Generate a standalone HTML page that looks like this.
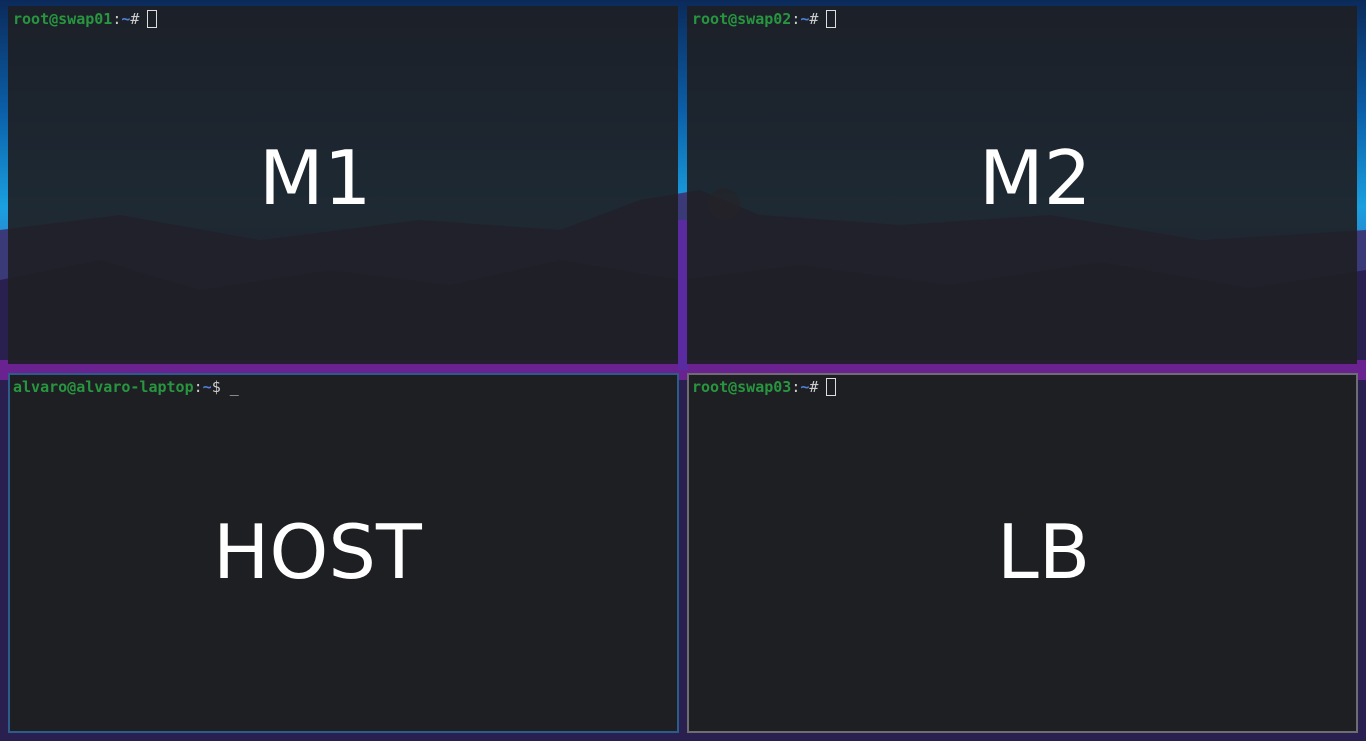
<!DOCTYPE html>
<html><head><meta charset="utf-8"><style>
html,body{margin:0;padding:0;width:1366px;height:741px;overflow:hidden}
body{position:relative;background:linear-gradient(180deg,#0b2a5a 0%,#0b5fa8 15%,#1aa0e0 28%,#3a6fc0 38%,#5a3aa8 48%,#6a2a9a 55%,#3a1a6a 75%,#14123a 100%)}
.p{position:absolute;box-sizing:border-box;font-family:"DejaVu Sans Mono","Liberation Mono",monospace;font-size:15px;font-weight:bold;color:#ddd}
.t{background:rgba(30,32,36,0.92)}
.b{background:#1e1f23}
.pr{position:absolute;left:5px;top:4px;white-space:pre}
.g{color:#27963f}.bl{color:#4f7fd6}.w{color:#ccc;font-weight:normal}
.cur{display:inline-block;width:10px;height:18px;border:1px solid #ddd;box-sizing:border-box;vertical-align:-4px;margin-left:8px}
.big{position:absolute;font-family:"DejaVu Sans",sans-serif;font-weight:normal;font-size:75px;color:#fff;line-height:1}
</style></head><body>
<svg style="position:absolute;left:0;top:0" width="1366" height="741">
<path d="M0,230 L120,215 L260,240 L420,220 L560,230 L640,200 L700,190 L760,215 L900,225 L1050,215 L1200,240 L1366,230 L1366,741 L0,741Z" fill="#3a3a78"/>
<path d="M0,280 L100,260 L200,290 L330,270 L450,285 L560,260 L680,280 L800,265 L950,285 L1100,262 L1250,288 L1366,270 L1366,741 L0,741Z" fill="#2a2050"/>
<rect x="0" y="360" width="1366" height="20" fill="#6a2290"/>
<rect x="678" y="220" width="10" height="150" fill="#5a2aa0"/>
<circle cx="724" cy="204" r="16" fill="#6a5050" opacity="0.6"/>
</svg>
<div class="p t" style="left:8px;top:6px;width:670px;height:358px"><div class="pr"><span class="g">root@swap01</span><span class="w">:</span><span class="bl">~</span><span class="w">#</span><span class="cur"></span></div><div class="big" style="left:251px;top:135px">M1</div></div>
<div class="p t" style="left:687px;top:6px;width:670px;height:358px"><div class="pr"><span class="g">root@swap02</span><span class="w">:</span><span class="bl">~</span><span class="w">#</span><span class="cur"></span></div><div class="big" style="left:292px;top:135px">M2</div></div>
<div class="p b" style="left:8px;top:373px;width:671px;height:360px;border:2px solid #2b5c8a"><div class="pr" style="left:3px;top:3px"><span class="g">alvaro@alvaro-laptop</span><span class="w">:</span><span class="bl">~</span><span class="w">$ _</span></div><div class="big" style="left:203px;top:140px">HOST</div></div>
<div class="p b" style="left:687px;top:373px;width:671px;height:360px;border:2px solid #6e6e72"><div class="pr" style="left:3px;top:3px"><span class="g">root@swap03</span><span class="w">:</span><span class="bl">~</span><span class="w">#</span><span class="cur"></span></div><div class="big" style="left:308px;top:140px">LB</div></div>
</body></html>
